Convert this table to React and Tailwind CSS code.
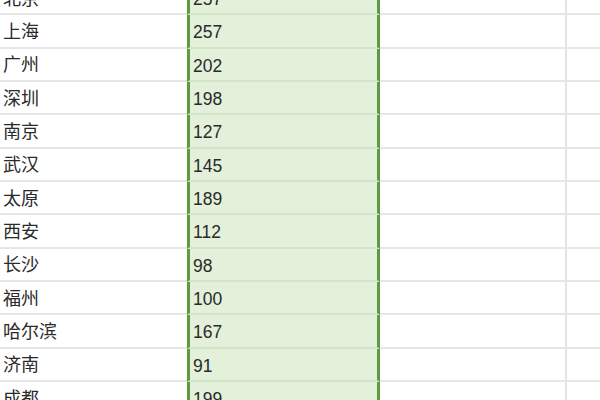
import React from 'react';

const rows = [
  ['北京', 257],
  ['上海', 257],
  ['广州', 202],
  ['深圳', 198],
  ['南京', 127],
  ['武汉', 145],
  ['太原', 189],
  ['西安', 112],
  ['长沙', 98],
  ['福州', 100],
  ['哈尔滨', 167],
  ['济南', 91],
  ['成都', 199],
];

const font = { fontFamily: '"Liberation Sans", "Noto Sans CJK SC", sans-serif' };

const App = () => {
  return (
    <div className="w-[600px] h-[400px] overflow-hidden bg-white text-[#2a2a2a]" style={font}>
      <div className="-mt-[18px]">
        {rows.map(([city, n]) => (
          <div key={city} className="flex h-[33.34px]">
            <div className="w-[187px] shrink-0 border-b-2 border-[#e6e6e6] pl-[3px] flex items-center text-[18px] pt-[3px]">
              {city}
            </div>
            <div className="w-[193px] shrink-0 bg-[#e3f1da] border-l-[3px] border-r-[3px] border-l-[#5c9a44] border-r-[#5c9a44] border-b-2 border-b-[#d3e4c9] pl-[3px] flex items-center text-[17.5px] pt-[3px]">
              {n}
            </div>
            <div className="w-[187px] shrink-0 border-b-2 border-[#e6e6e6] border-r-2 border-r-[#e4e4e4]" />
            <div className="flex-1 border-b-2 border-[#e6e6e6]" />
          </div>
        ))}
      </div>
    </div>
  );
};

export default App;
